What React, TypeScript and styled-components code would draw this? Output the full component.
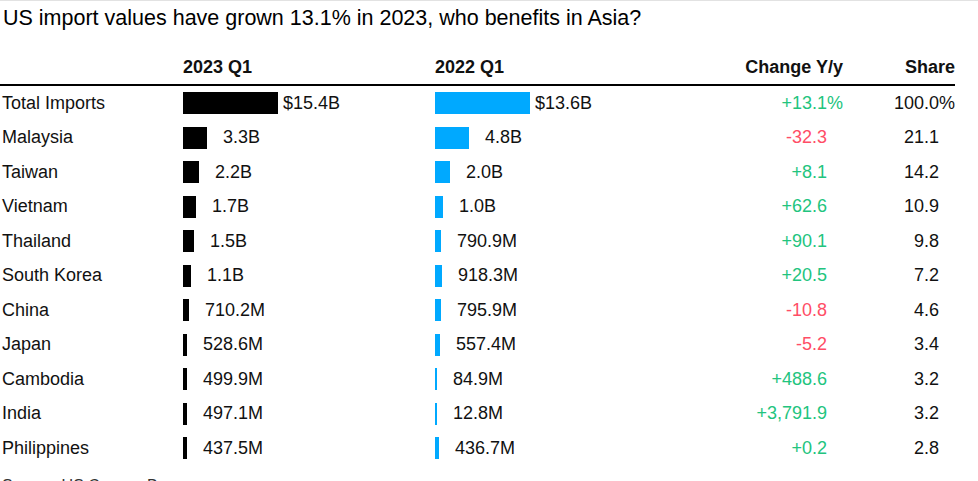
import { createGlobalStyle, styled } from 'styled-components';

const GlobalStyle = createGlobalStyle`
  body {
    margin: 0;
    background: #fff;
  }
`;

const BAR_SCALE = 6.98;
const TOTAL_BAR = 95;

const Page = styled.div`
  width: 978px;
  height: 481px;
  overflow: hidden;
  box-sizing: border-box;
  border-top: 1px solid #e2e2e2;
  font-family: "Liberation Sans", Arial, sans-serif;
  color: #111;
`;

const Title = styled.h1`
  margin: 0;
  padding-left: 3px;
  font-size: 21.5px;
  font-weight: 400;
  line-height: 34px;
  color: #000;
`;

const Table = styled.div`
  width: 955px;
  margin-top: 21px;
  font-size: 18px;
`;

const RowGrid = styled.div`
  display: grid;
  grid-template-columns: 183px 252px 288px 120px 112px;
`;

const HeaderRow = styled(RowGrid)`
  border-bottom: 2px solid #000;
  font-weight: 700;
  line-height: 22px;
  padding-bottom: 6px;
`;

const HeaderCell = styled.div<{ $align?: 'left' | 'right' }>`
  text-align: ${(props) => props.$align || 'left'};
`;

const Row = styled(RowGrid)`
  height: 34.5px;
  align-items: center;
`;

const Label = styled.div`
  padding-left: 2px;
  white-space: nowrap;
`;

const BarCell = styled.div`
  display: flex;
  align-items: center;
`;

const Bar = styled.div<{ $color: string }>`
  height: 22px;
  flex-shrink: 0;
  background-color: ${(props) => props.$color};
`;

const Value = styled.div<{ $total?: boolean }>`
  margin-left: ${(props) => (props.$total ? '5px' : '6px')};
  white-space: nowrap;
`;

const Hidden = styled.span<{ $hidden: boolean }>`
  visibility: ${(props) => (props.$hidden ? 'hidden' : 'visible')};
`;

const Change = styled.div<{ $negative: boolean }>`
  text-align: right;
  color: ${(props) => (props.$negative ? '#ff4d66' : '#22c47e')};
`;

const Share = styled.div`
  text-align: right;
`;

const Source = styled.div`
  margin-top: 10px;
  padding-left: 2px;
  font-size: 16px;
  line-height: 20px;
  color: #333;
`;

type Country = {
  name: string,
  v2023: number,
  v2022: number,
  label2023: string,
  label2022: string,
  change: string,
  share: string,
  total?: boolean
}

const rows: Country[] = [
  { name: 'Total Imports', v2023: 15.4, v2022: 13.6, label2023: '15.4B', label2022: '13.6B', change: '+13.1', share: '100.0', total: true },
  { name: 'Malaysia', v2023: 3.3, v2022: 4.8, label2023: '3.3B', label2022: '4.8B', change: '-32.3', share: '21.1' },
  { name: 'Taiwan', v2023: 2.2, v2022: 2.0, label2023: '2.2B', label2022: '2.0B', change: '+8.1', share: '14.2' },
  { name: 'Vietnam', v2023: 1.7, v2022: 1.0, label2023: '1.7B', label2022: '1.0B', change: '+62.6', share: '10.9' },
  { name: 'Thailand', v2023: 1.5, v2022: 0.7909, label2023: '1.5B', label2022: '790.9M', change: '+90.1', share: '9.8' },
  { name: 'South Korea', v2023: 1.1, v2022: 0.9183, label2023: '1.1B', label2022: '918.3M', change: '+20.5', share: '7.2' },
  { name: 'China', v2023: 0.7102, v2022: 0.7959, label2023: '710.2M', label2022: '795.9M', change: '-10.8', share: '4.6' },
  { name: 'Japan', v2023: 0.5286, v2022: 0.5574, label2023: '528.6M', label2022: '557.4M', change: '-5.2', share: '3.4' },
  { name: 'Cambodia', v2023: 0.4999, v2022: 0.0849, label2023: '499.9M', label2022: '84.9M', change: '+488.6', share: '3.2' },
  { name: 'India', v2023: 0.4971, v2022: 0.0128, label2023: '497.1M', label2022: '12.8M', change: '+3,791.9', share: '3.2' },
  { name: 'Philippines', v2023: 0.4375, v2022: 0.4367, label2023: '437.5M', label2022: '436.7M', change: '+0.2', share: '2.8' },
];

const barWidth = (value: number, total?: boolean) => {
  if (total) return TOTAL_BAR;
  return Math.max(2, Math.round(value * BAR_SCALE + 0.8));
}

type BarValueProps = {
  value: number,
  label: string,
  color: string,
  total?: boolean
}

const BarValue = ({ value, label, color, total }: BarValueProps) => {
  return (
    <BarCell>
      <Bar $color={color} style={{ width: barWidth(value, total) }} />
      <Value $total={total}>
        <Hidden $hidden={!total}>$</Hidden>
        {label}
      </Value>
    </BarCell>
  )
}

export default function App() {
  return (
    <Page>
      <GlobalStyle />
      <Title>US import values have grown 13.1% in 2023, who benefits in Asia?</Title>
      <Table>
        <HeaderRow>
          <HeaderCell />
          <HeaderCell>2023 Q1</HeaderCell>
          <HeaderCell>2022 Q1</HeaderCell>
          <HeaderCell $align="right">Change Y/y</HeaderCell>
          <HeaderCell $align="right">Share</HeaderCell>
        </HeaderRow>
        {rows.map((row) => (
          <Row key={row.name}>
            <Label>{row.name}</Label>
            <BarValue value={row.v2023} label={row.label2023} color="#000" total={row.total} />
            <BarValue value={row.v2022} label={row.label2022} color="#00a9ff" total={row.total} />
            <Change $negative={row.change.startsWith('-')}>
              {row.change}
              <Hidden $hidden={!row.total}>%</Hidden>
            </Change>
            <Share>
              {row.share}
              <Hidden $hidden={!row.total}>%</Hidden>
            </Share>
          </Row>
        ))}
      </Table>
      <Source>Source: US Census Bureau</Source>
    </Page>
  )
}
